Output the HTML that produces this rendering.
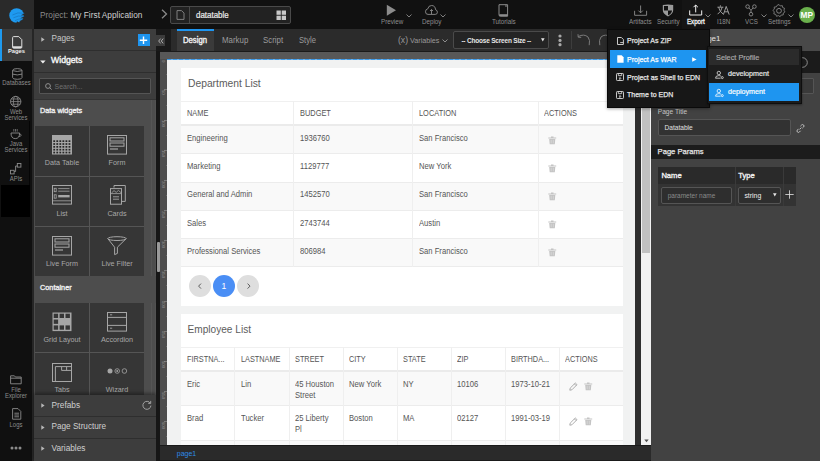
<!DOCTYPE html>
<html><head><meta charset="utf-8">
<style>
*{box-sizing:border-box;}
html,body{margin:0;padding:0;}
body{width:820px;height:461px;overflow:hidden;position:relative;background:#111;font-family:"Liberation Sans",sans-serif;}
.a{position:absolute;}
.t{position:absolute;white-space:nowrap;}
svg{position:absolute;overflow:visible;}
</style></head>
<body>
<!-- TOP BAR -->
<div class="a" style="left:0;top:0;width:820px;height:29px;background:#111;"></div>
<div class="a" style="left:0;top:0;width:34px;height:29px;background:#2a2a2a;"></div>
<svg style="left:9px;top:7.5px" width="16" height="16" viewBox="0 0 16 16">
  <circle cx="7.6" cy="7.5" r="7.3" fill="#1e9af0"/>
  <path d="M3.4 7 Q8.5 3.6 15.4 5.4" stroke="#1670b8" stroke-width="0.6" fill="none"/>
  <path d="M4.4 9.8 Q9 7 15.2 8.4" stroke="#1670b8" stroke-width="0.6" fill="none"/>
  <path d="M6 12.6 Q10 10 14 11.4" stroke="#1670b8" stroke-width="0.6" fill="none"/>
  <path d="M15.4 5.4 L11.8 7.2 L16 7.4 Z M15.2 8.4 L11 10.2 L16 10.6 Z M14 11.4 L10 13.2 L14 15 Z M10.5 15 L8 13.2 L7 16 Z" fill="#2a2a2a"/>
</svg>
<div class="t" style="left:40px;top:9.5px;font-size:8.3px;line-height:10px;color:#8a8a8a;">Project: <span style="color:#d0d0d0">My First Application</span></div>
<svg style="left:161px;top:9px" width="7" height="10" viewBox="0 0 7 10"><path d="M1 0.8 L5.5 5 L1 9.2" stroke="#8a8a8a" stroke-width="1.3" fill="none"/></svg>
<div class="a" style="left:170px;top:6px;width:121px;height:18px;border:1px solid #4a4a4a;border-radius:2px;background:#222;"></div>
<div class="a" style="left:189.2px;top:7px;width:1px;height:16px;background:#4a4a4a;"></div>
<svg style="left:176px;top:10px" width="9" height="10" viewBox="0 0 9 10"><path d="M1 0.6 H5.5 L8 3.1 V9.4 H1 Z" stroke="#8a8a8a" stroke-width="0.9" fill="none"/></svg>
<div class="t" style="left:196px;top:10px;font-size:8.4px;line-height:10px;color:#ececec;-webkit-text-stroke:0.2px;transform:scaleX(0.95);transform-origin:0 0;">datatable</div>
<svg style="left:276px;top:10px" width="11" height="11" viewBox="0 0 11 11"><rect x="0.5" y="0.5" width="4.3" height="4.3" fill="#c8c8c8"/><rect x="5.7" y="0.5" width="4.3" height="4.3" fill="#c8c8c8"/><rect x="0.5" y="5.7" width="4.3" height="4.3" fill="#c8c8c8"/><rect x="5.7" y="5.7" width="4.3" height="4.3" fill="#c8c8c8"/></svg>

<!-- top actions -->
<svg style="left:386px;top:4px" width="11" height="13" viewBox="0 0 11 13"><path d="M0.8 0.8 L10 6.3 L0.8 11.8 Z" fill="#8c8c8c"/></svg>
<div class="t" style="left:381px;top:18.1px;font-size:6.8px;line-height:7px;color:#8e8e8e;transform:scaleX(0.92);transform-origin:0 0;">Preview</div>
<svg style="left:406px;top:14px" width="6" height="4" viewBox="0 0 6 4"><path d="M0.5 0.5 L3 3 L5.5 0.5" stroke="#8c8c8c" stroke-width="0.9" fill="none"/></svg>
<svg style="left:424.5px;top:5px" width="13" height="10" viewBox="0 0 13 10"><path d="M3 9.4 H10.2 Q12.4 9.4 12.4 7.2 Q12.4 5.2 10.6 4.8 Q10.2 0.5 6.6 0.5 Q3.4 0.5 2.8 3.8 Q0.5 4.2 0.5 6.8 Q0.5 9.4 3 9.4 Z" stroke="#8c8c8c" stroke-width="0.9" fill="none"/><path d="M6.5 9.2 V4.6 M5 6 L6.5 4.5 L8 6" stroke="#8c8c8c" stroke-width="0.9" fill="none"/></svg>
<div class="t" style="left:422px;top:18.1px;font-size:6.8px;line-height:7px;color:#8e8e8e;transform:scaleX(0.92);transform-origin:0 0;">Deploy</div>
<svg style="left:440px;top:14px" width="6" height="4" viewBox="0 0 6 4"><path d="M0.5 0.5 L3 3 L5.5 0.5" stroke="#8c8c8c" stroke-width="0.9" fill="none"/></svg>
<svg style="left:498px;top:4px" width="11" height="13" viewBox="0 0 11 13"><path d="M1 0.7 H9.6 V12.2 H2.4 Q1 12.2 1 10.8 Z" stroke="#8c8c8c" stroke-width="1" fill="none"/><path d="M1.2 10.2 H9.6 V12.2 H1.2 Z" fill="#8c8c8c"/><path d="M8 0.7 V3" stroke="#8c8c8c" stroke-width="1"/></svg>
<div class="t" style="left:492px;top:18.1px;font-size:6.8px;line-height:7px;color:#8e8e8e;transform:scaleX(0.92);transform-origin:0 0;">Tutorials</div>

<svg style="left:634px;top:5px" width="14" height="11" viewBox="0 0 14 11"><path d="M0.6 5.8 V10.3 H12.6 V5.8" stroke="#8c8c8c" stroke-width="0.9" fill="none"/><path d="M6.6 0.5 V7.8 M4.4 5.6 L6.6 7.8 L8.8 5.6" stroke="#8c8c8c" stroke-width="0.9" fill="none"/></svg>
<div class="t" style="left:629px;top:18.1px;font-size:6.8px;line-height:7px;color:#8e8e8e;transform:scaleX(0.92);transform-origin:0 0;">Artifacts</div>
<svg style="left:662px;top:4px" width="12" height="13" viewBox="0 0 12 13"><path d="M0.8 1 L6 0.4 L11.2 1 V6 Q11.2 10 6 12.4 Q0.8 10 0.8 6 Z" fill="#9a9a9a"/><path d="M2 2 H6 V6.4 H2 Z M6 6.4 H10 Q9.8 9.6 6 11.2 Z" fill="#111"/></svg>
<div class="t" style="left:657px;top:18.1px;font-size:6.8px;line-height:7px;color:#8e8e8e;transform:scaleX(0.92);transform-origin:0 0;">Security</div>
<div class="a" style="left:682px;top:0;width:28px;height:29px;background:#151515;"></div>
<svg style="left:689px;top:4px" width="14" height="12" viewBox="0 0 14 12"><path d="M0.7 6.4 V11 H12.7 V6.4" stroke="#f0f0f0" stroke-width="1" fill="none"/><path d="M6.7 8.4 V1 M4.5 3.2 L6.7 1 L8.9 3.2" stroke="#f0f0f0" stroke-width="1" fill="none"/></svg>
<div class="t" style="left:687px;top:18.1px;font-size:6.7px;line-height:7px;color:#f4f4f4;-webkit-text-stroke:0.3px;transform:scaleX(0.92);transform-origin:0 0;">Export</div>
<svg style="left:705px;top:14px" width="6" height="4" viewBox="0 0 6 4"><path d="M0.5 0.5 L3 3 L5.5 0.5" stroke="#8c8c8c" stroke-width="0.9" fill="none"/></svg>
<svg style="left:717px;top:5px" width="13" height="10" viewBox="0 0 13 10"><path d="M3.4 0.3 V1.8 M0.4 2.2 H6.4 M1.6 2.2 Q2.6 6.6 6.2 9.2 M5.2 2.2 Q4.4 6.6 0.6 9.2" stroke="#9a9a9a" stroke-width="1" fill="none"/><path d="M6.4 9.6 L9.2 1.4 L12.2 9.6 M7.4 6.8 H11.2" stroke="#9a9a9a" stroke-width="1" fill="none"/></svg>
<div class="t" style="left:717px;top:18.1px;font-size:6.8px;line-height:7px;color:#8e8e8e;transform:scaleX(0.92);transform-origin:0 0;">I18N</div>
<svg style="left:745px;top:4px" width="12" height="13" viewBox="0 0 12 13"><circle cx="2.6" cy="2.6" r="1.8" stroke="#8c8c8c" stroke-width="0.9" fill="none"/><circle cx="9.4" cy="2.6" r="1.8" stroke="#8c8c8c" stroke-width="0.9" fill="none"/><circle cx="6" cy="10.2" r="1.8" stroke="#8c8c8c" stroke-width="0.9" fill="none"/><path d="M4 4 L6 6.3 L8 4 M6 6.3 V8.4" stroke="#8c8c8c" stroke-width="0.9" fill="none"/></svg>
<div class="t" style="left:745px;top:18.1px;font-size:6.8px;line-height:7px;color:#8e8e8e;transform:scaleX(0.92);transform-origin:0 0;">VCS</div>
<svg style="left:761px;top:14px" width="6" height="4" viewBox="0 0 6 4"><path d="M0.5 0.5 L3 3 L5.5 0.5" stroke="#8c8c8c" stroke-width="0.9" fill="none"/></svg>
<svg style="left:772px;top:4px" width="14" height="14" viewBox="0 0 14 14"><path d="M7 0.8 L8.3 2.3 L10.3 1.9 L10.7 3.9 L12.6 4.6 L11.9 6.5 L13 8.2 L11.3 9.3 L11.2 11.3 L9.2 11.3 L8.1 13 L6.4 11.9 L4.5 12.6 L3.8 10.7 L1.8 10.2 L2.3 8.2 L0.9 6.7 L2.4 5.4 L2.2 3.4 L4.2 3.2 L5.3 1.5 Z" stroke="#8c8c8c" stroke-width="0.8" fill="none" transform="translate(0 -0.3)"/><circle cx="7" cy="6.8" r="2.4" stroke="#8c8c8c" stroke-width="0.9" fill="none"/></svg>
<div class="t" style="left:768px;top:18.1px;font-size:6.8px;line-height:7px;color:#8e8e8e;transform:scaleX(0.92);transform-origin:0 0;">Settings</div>
<svg style="left:788px;top:14px" width="6" height="4" viewBox="0 0 6 4"><path d="M0.5 0.5 L3 3 L5.5 0.5" stroke="#8c8c8c" stroke-width="0.9" fill="none"/></svg>
<div class="a" style="left:798.5px;top:6.6px;width:16.4px;height:16.4px;border-radius:50%;background:#6ab04c;"></div>
<div class="t" style="left:798.5px;top:10px;width:16.4px;text-align:center;font-size:8.3px;line-height:10px;color:#fff;font-weight:700;">MP</div>

<!-- LEFT SIDEBAR -->
<div class="a" style="left:0;top:29px;width:32px;height:432px;background:#101010;"></div>
<div class="a" style="left:32px;top:29px;width:2px;height:432px;background:#262626;"></div>
<div class="a" style="left:0;top:29px;width:32px;height:32px;background:#3c3c3c;"></div>
<div class="a" style="left:0;top:29px;width:1.5px;height:32px;background:#1e9af0;"></div>
<svg style="left:12px;top:35.5px" width="11" height="13" viewBox="0 0 11 13"><path d="M1.6 0.6 H6.8 L9.8 3.6 V11.2 Q9.8 12.2 8.8 12.2 H1.6 Q0.6 12.2 0.6 11.2 V1.6 Q0.6 0.6 1.6 0.6 Z" stroke="#dedede" stroke-width="1" fill="none"/><path d="M0.8 10.2 H9.6 V11.4 Q9.6 12 8.8 12 H1.6 Q0.8 12 0.8 11.4 Z" fill="#dedede"/></svg>
<div class="t" style="left:0;top:48px;width:33px;text-align:center;font-size:5.8px;line-height:7px;color:#f0f0f0;font-weight:700;">Pages</div>

<svg style="left:12px;top:68px" width="11" height="12" viewBox="0 0 11 12"><path d="M0.6 2.4 Q0.6 0.6 5.3 0.6 Q10 0.6 10 2.4 V9.6 Q10 11.3 5.3 11.3 Q0.6 11.3 0.6 9.6 Z" stroke="#8c8c8c" stroke-width="0.9" fill="none"/><path d="M0.6 2.6 Q5.3 4.4 10 2.6 M0.6 6.1 Q5.3 7.8 10 6.1" stroke="#8c8c8c" stroke-width="0.9" fill="none"/></svg>
<div class="t" style="left:0;top:79.4px;width:33px;text-align:center;font-size:6.6px;line-height:7px;color:#8c8c8c;transform:scaleX(0.9);">Databases</div>

<svg style="left:10px;top:96px" width="12" height="12" viewBox="0 0 12 12"><circle cx="5.7" cy="5.6" r="5.2" stroke="#8c8c8c" stroke-width="0.9" fill="none"/><ellipse cx="5.7" cy="5.6" rx="2.3" ry="5.2" stroke="#8c8c8c" stroke-width="0.8" fill="none"/><path d="M0.5 5.6 H10.9 M1.3 3 H10.1 M1.3 8.2 H10.1" stroke="#8c8c8c" stroke-width="0.8"/></svg>
<div class="t" style="left:0;top:108.5px;width:32px;text-align:center;font-size:6.6px;line-height:6.2px;color:#8c8c8c;transform:scaleX(0.9);">Web<br>Services</div>

<svg style="left:10px;top:128px" width="12" height="12" viewBox="0 0 12 12"><path d="M1 5 H9.6 Q9.6 10.6 5.3 10.6 Q1 10.6 1 5 Z" stroke="#8c8c8c" stroke-width="0.9" fill="none"/><path d="M9.4 6 Q11.3 6 11.1 7.4 Q10.8 8.6 9 8.4" stroke="#8c8c8c" stroke-width="0.8" fill="none"/><path d="M3.8 1 V3.6 M5.5 1 V3.6 M7.2 1 V3.6" stroke="#8c8c8c" stroke-width="0.7"/></svg>
<div class="t" style="left:0;top:140.5px;width:32px;text-align:center;font-size:6.6px;line-height:6.2px;color:#8c8c8c;transform:scaleX(0.9);">Java<br>Services</div>

<svg style="left:10px;top:163px" width="12" height="12" viewBox="0 0 12 12"><rect x="0.5" y="7.3" width="3.6" height="3.6" stroke="#8c8c8c" stroke-width="0.9" fill="none"/><rect x="7.3" y="0.5" width="3.6" height="3.6" stroke="#8c8c8c" stroke-width="0.9" fill="none"/><path d="M4.1 8.5 H5.6 V3 H7.3" stroke="#8c8c8c" stroke-width="0.9" fill="none"/></svg>
<div class="t" style="left:0;top:174.5px;width:32px;text-align:center;font-size:6.6px;line-height:7px;color:#8c8c8c;transform:scaleX(0.9);">APIs</div>
<div class="a" style="left:1px;top:185px;width:28.5px;height:32px;background:#000;"></div>
<div class="a" style="left:28.8px;top:121px;width:0.9px;height:64px;background:#050505;"></div>

<svg style="left:10px;top:375px" width="12" height="10" viewBox="0 0 12 10"><path d="M0.6 0.8 H4.4 L5.4 2 H11.2 V8.8 H0.6 Z M0.6 3.2 H11.2" stroke="#8c8c8c" stroke-width="0.9" fill="none"/></svg>
<div class="t" style="left:0;top:386.5px;width:32px;text-align:center;font-size:6.6px;line-height:6.2px;color:#8c8c8c;transform:scaleX(0.9);">File<br>Explorer</div>
<svg style="left:12px;top:407.5px" width="10" height="12" viewBox="0 0 10 12"><path d="M0.6 0.6 H6 L8.8 3.4 V11.2 H0.6 Z" stroke="#8c8c8c" stroke-width="0.9" fill="none"/><path d="M2.4 5.2 H7 M2.4 7 H7 M2.4 8.8 H7" stroke="#8c8c8c" stroke-width="0.9"/></svg>
<div class="t" style="left:0;top:421px;width:32px;text-align:center;font-size:6.6px;line-height:7px;color:#8c8c8c;transform:scaleX(0.9);">Logs</div>
<svg style="left:10px;top:446px" width="12" height="4" viewBox="0 0 12 4"><circle cx="2" cy="2" r="1.5" fill="#8c8c8c"/><circle cx="6" cy="2" r="1.5" fill="#8c8c8c"/><circle cx="10" cy="2" r="1.5" fill="#8c8c8c"/></svg>

<!-- LEFT PANEL -->
<div class="a" style="left:34px;top:29px;width:122px;height:432px;background:#3d3d3d;"></div>
<div class="a" style="left:34px;top:50px;width:122px;height:1px;background:#2e2e2e;"></div>
<svg style="left:41px;top:37px" width="4" height="5" viewBox="0 0 4 5"><path d="M0.3 0.3 L3.6 2.5 L0.3 4.7 Z" fill="#b8b8b8"/></svg>
<div class="t" style="left:51.5px;top:34.2px;font-size:8.2px;line-height:10px;color:#c8c8c8;">Pages</div>
<div class="a" style="left:137.5px;top:33.5px;width:12.7px;height:12.6px;background:#1e95f0;"></div>
<svg style="left:137.3px;top:33.5px" width="13" height="12.5" viewBox="0 0 13 12.5"><path d="M6.5 2.6 V10 M2.8 6.3 H10.2" stroke="#fff" stroke-width="1.4"/></svg>
<div class="a" style="left:34px;top:72px;width:122px;height:1px;background:#2e2e2e;"></div>
<svg style="left:39.5px;top:59.5px" width="6" height="4" viewBox="0 0 6 4"><path d="M0.2 0.4 H5.6 L2.9 3.6 Z" fill="#f0f0f0"/></svg>
<div class="t" style="left:51px;top:54.7px;font-size:8.7px;line-height:10px;color:#f4f4f4;-webkit-text-stroke:0.4px;">Widgets</div>
<div class="a" style="left:39.3px;top:78.4px;width:111.9px;height:16px;background:#2c2c2c;border:1px solid #555;border-radius:1px;"></div>
<svg style="left:45px;top:83px" width="7" height="7" viewBox="0 0 7 7"><circle cx="3" cy="3" r="2.4" stroke="#999" stroke-width="0.9" fill="none"/><path d="M4.7 4.7 L6.6 6.6" stroke="#999" stroke-width="0.9"/></svg>
<div class="t" style="left:54.5px;top:82px;font-size:7px;line-height:9px;color:#6f6f6f;">Search...</div>
<div class="a" style="left:34px;top:98.5px;width:122px;height:1px;background:#333;"></div>
<div class="a" style="left:34px;top:99.5px;width:122px;height:296px;background:#4d4d4d;"></div>
<div class="t" style="left:40px;top:105.9px;font-size:7.3px;line-height:9px;color:#eeeeee;-webkit-text-stroke:0.35px;">Data widgets</div>
<div class="a" style="left:35px;top:126px;width:109px;height:270px;background:#555;"></div>
<div class="a" style="left:150.8px;top:99.5px;width:0.8px;height:296px;background:#555;"></div>
<div class="a" style="left:155px;top:99.5px;width:1px;height:296px;background:#525252;"></div>
<div class="a" style="left:35px;top:126px;width:54px;height:49.5px;background:#363636;"></div>
<svg style="left:51.8px;top:135px" width="20" height="20" viewBox="0 0 20 20"><rect x="0" y="0" width="20" height="19.5" fill="#a6a6a6"/><rect x="1.30" y="5.30" width="1.8" height="1.7" fill="#262626"/><rect x="1.30" y="8.15" width="1.8" height="1.7" fill="#262626"/><rect x="1.30" y="11.00" width="1.8" height="1.7" fill="#262626"/><rect x="1.30" y="13.85" width="1.8" height="1.7" fill="#262626"/><rect x="1.30" y="16.70" width="1.8" height="1.7" fill="#262626"/><rect x="4.35" y="5.30" width="1.8" height="1.7" fill="#262626"/><rect x="4.35" y="8.15" width="1.8" height="1.7" fill="#262626"/><rect x="4.35" y="11.00" width="1.8" height="1.7" fill="#262626"/><rect x="4.35" y="13.85" width="1.8" height="1.7" fill="#262626"/><rect x="4.35" y="16.70" width="1.8" height="1.7" fill="#262626"/><rect x="7.40" y="5.30" width="1.8" height="1.7" fill="#262626"/><rect x="7.40" y="8.15" width="1.8" height="1.7" fill="#262626"/><rect x="7.40" y="11.00" width="1.8" height="1.7" fill="#262626"/><rect x="7.40" y="13.85" width="1.8" height="1.7" fill="#262626"/><rect x="7.40" y="16.70" width="1.8" height="1.7" fill="#262626"/><rect x="10.45" y="5.30" width="1.8" height="1.7" fill="#262626"/><rect x="10.45" y="8.15" width="1.8" height="1.7" fill="#262626"/><rect x="10.45" y="11.00" width="1.8" height="1.7" fill="#262626"/><rect x="10.45" y="13.85" width="1.8" height="1.7" fill="#262626"/><rect x="10.45" y="16.70" width="1.8" height="1.7" fill="#262626"/><rect x="13.50" y="5.30" width="1.8" height="1.7" fill="#262626"/><rect x="13.50" y="8.15" width="1.8" height="1.7" fill="#262626"/><rect x="13.50" y="11.00" width="1.8" height="1.7" fill="#262626"/><rect x="13.50" y="13.85" width="1.8" height="1.7" fill="#262626"/><rect x="13.50" y="16.70" width="1.8" height="1.7" fill="#262626"/><rect x="16.55" y="5.30" width="1.8" height="1.7" fill="#262626"/><rect x="16.55" y="8.15" width="1.8" height="1.7" fill="#262626"/><rect x="16.55" y="11.00" width="1.8" height="1.7" fill="#262626"/><rect x="16.55" y="13.85" width="1.8" height="1.7" fill="#262626"/><rect x="16.55" y="16.70" width="1.8" height="1.7" fill="#262626"/></svg>
<div class="t" style="left:35px;top:159px;width:54px;text-align:center;font-size:8px;line-height:8px;color:#a8a8a8;transform:scaleX(0.9);">Data Table</div>
<div class="a" style="left:90px;top:126px;width:54px;height:49.5px;background:#363636;"></div>
<svg style="left:106.8px;top:135px" width="20" height="20" viewBox="0 0 20 20"><rect x="0.5" y="0.5" width="19" height="18.6" stroke="#a6a6a6" stroke-width="1" fill="none"/><rect x="3" y="2.8" width="14" height="3.2" stroke="#a6a6a6" stroke-width="1" fill="none"/><rect x="3" y="8" width="14" height="3.2" stroke="#a6a6a6" stroke-width="1" fill="none"/><path d="M3 14 H11" stroke="#a6a6a6" stroke-width="1.2"/></svg>
<div class="t" style="left:90px;top:159px;width:54px;text-align:center;font-size:8px;line-height:8px;color:#a8a8a8;transform:scaleX(0.9);">Form</div>
<div class="a" style="left:35px;top:176.6px;width:54px;height:49.5px;background:#363636;"></div>
<svg style="left:51.8px;top:185.2px" width="20" height="20" viewBox="0 0 20 20"><rect x="0.5" y="0.5" width="19" height="18.6" stroke="#a6a6a6" stroke-width="1" fill="none"/><rect x="2.2" y="3.3" width="2" height="3.4" stroke="#a6a6a6" stroke-width="0.8" fill="none"/><rect x="2.2" y="9.8" width="2" height="3.4" stroke="#a6a6a6" stroke-width="0.8" fill="none"/><path d="M6.2 3.6 H17.5 M6.2 6.2 H17.5" stroke="#a6a6a6" stroke-width="0.8"/><rect x="6.2" y="10" width="11.4" height="2.4" fill="#a6a6a6"/><path d="M0.5 15.8 H19.5" stroke="#a6a6a6" stroke-width="0.8"/></svg>
<div class="t" style="left:35px;top:209.6px;width:54px;text-align:center;font-size:8px;line-height:8px;color:#a8a8a8;transform:scaleX(0.9);">List</div>
<div class="a" style="left:90px;top:176.6px;width:54px;height:49.5px;background:#363636;"></div>
<svg style="left:109.5px;top:185.2px" width="16" height="20" viewBox="0 0 16 20"><path d="M4 2.6 V0.5 H15.3 V16.4 H11.5" stroke="#a6a6a6" stroke-width="1" fill="none"/><rect x="0.5" y="3.6" width="11" height="15.6" stroke="#a6a6a6" stroke-width="1" fill="none"/><path d="M1 8.6 H11 M1.5 8 L4 5.6 L6.2 7.4 L8.4 5.4 L11 7.6" stroke="#a6a6a6" stroke-width="0.8" fill="none"/><path d="M3 11.8 H9 M3 14.2 H9" stroke="#a6a6a6" stroke-width="0.9"/></svg>
<div class="t" style="left:90px;top:209.6px;width:54px;text-align:center;font-size:8px;line-height:8px;color:#a8a8a8;transform:scaleX(0.9);">Cards</div>
<div class="a" style="left:35px;top:227.2px;width:54px;height:49.5px;background:#363636;"></div>
<svg style="left:51.8px;top:236px" width="20" height="20" viewBox="0 0 20 20"><rect x="0.5" y="0.5" width="19" height="18.6" stroke="#a6a6a6" stroke-width="1" fill="none"/><rect x="3" y="2.8" width="14" height="3.2" stroke="#a6a6a6" stroke-width="1" fill="none"/><rect x="3" y="8" width="14" height="3.2" stroke="#a6a6a6" stroke-width="1" fill="none"/><path d="M3 14 H11" stroke="#a6a6a6" stroke-width="1.2"/></svg>
<div class="t" style="left:35px;top:260.2px;width:54px;text-align:center;font-size:8px;line-height:8px;color:#a8a8a8;transform:scaleX(0.9);">Live Form</div>
<div class="a" style="left:90px;top:227.2px;width:54px;height:49.5px;background:#363636;"></div>
<svg style="left:107px;top:236px" width="20" height="20" viewBox="0 0 20 20"><ellipse cx="10" cy="2.6" rx="9.2" ry="1.9" stroke="#a6a6a6" stroke-width="1" fill="none"/><path d="M0.8 2.6 L7.6 11.2 V18.6 L10.4 17.4 V11.2 L19.2 2.6" stroke="#a6a6a6" stroke-width="1" fill="none"/></svg>
<div class="t" style="left:90px;top:260.2px;width:54px;text-align:center;font-size:8px;line-height:8px;color:#a8a8a8;transform:scaleX(0.9);">Live Filter</div>
<div class="a" style="left:34px;top:275.6px;width:122px;height:27px;background:#4d4d4d;"></div>
<div class="t" style="left:40px;top:283px;font-size:7.3px;line-height:9px;color:#eeeeee;-webkit-text-stroke:0.35px;">Container</div>
<div class="a" style="left:35px;top:302.6px;width:54px;height:49.5px;background:#363636;"></div>
<svg style="left:52px;top:311.6px" width="20" height="20" viewBox="0 0 20 20"><rect x="0.5" y="0.5" width="19" height="18.6" fill="#a6a6a6"/><rect x="1.70" y="1.70" width="4.4" height="4.3" fill="#363636"/><rect x="7.60" y="1.70" width="4.4" height="4.3" fill="#363636"/><rect x="13.50" y="1.70" width="4.4" height="4.3" fill="#363636"/><rect x="1.70" y="7.55" width="4.4" height="4.3" fill="#363636"/><rect x="1.70" y="13.40" width="4.4" height="4.3" fill="#363636"/><rect x="7.60" y="13.40" width="4.4" height="4.3" fill="#363636"/><rect x="13.50" y="13.40" width="4.4" height="4.3" fill="#363636"/></svg>
<div class="t" style="left:35px;top:335.6px;width:54px;text-align:center;font-size:8px;line-height:8px;color:#a8a8a8;transform:scaleX(0.9);">Grid Layout</div>
<div class="a" style="left:90px;top:302.6px;width:54px;height:49.5px;background:#363636;"></div>
<svg style="left:107.3px;top:311.6px" width="20" height="20" viewBox="0 0 20 20"><rect x="0.5" y="0.5" width="19" height="18.6" stroke="#a6a6a6" stroke-width="1" fill="none"/><path d="M0.5 5.4 H19.5 M0.5 13.4 H19.5" stroke="#a6a6a6" stroke-width="1"/><path d="M3 2.8 H5.2 M3 16.2 H5.2" stroke="#a6a6a6" stroke-width="0.9"/></svg>
<div class="t" style="left:90px;top:335.6px;width:54px;text-align:center;font-size:8px;line-height:8px;color:#a8a8a8;transform:scaleX(0.9);">Accordion</div>
<div class="a" style="left:35px;top:353.2px;width:54px;height:49.5px;background:#363636;"></div>
<svg style="left:52px;top:362.6px" width="20" height="20" viewBox="0 0 20 20"><rect x="0.5" y="0.5" width="19" height="18" stroke="#a6a6a6" stroke-width="1" fill="none"/><path d="M3.4 18.5 V3.6 H19.5 M9.6 3.6 V7.4 H19.5 M14.6 3.6 V7.4" stroke="#a6a6a6" stroke-width="1" fill="none"/></svg>
<div class="t" style="left:35px;top:386.2px;width:54px;text-align:center;font-size:8px;line-height:8px;color:#a8a8a8;transform:scaleX(0.9);">Tabs</div>
<div class="a" style="left:90px;top:353.2px;width:54px;height:49.5px;background:#363636;"></div>
<svg style="left:107px;top:367.5px" width="21" height="6" viewBox="0 0 21 6"><circle cx="3" cy="3" r="2.5" fill="#a6a6a6"/><circle cx="10.2" cy="3" r="2.3" stroke="#a6a6a6" stroke-width="0.8" fill="none"/><circle cx="10.2" cy="3" r="0.9" fill="#a6a6a6"/><circle cx="17.4" cy="3" r="2.3" stroke="#a6a6a6" stroke-width="0.8" fill="none"/></svg>
<div class="t" style="left:90px;top:386.2px;width:54px;text-align:center;font-size:8px;line-height:8px;color:#a8a8a8;transform:scaleX(0.9);">Wizard</div>
<div class="a" style="left:34px;top:395px;width:122px;height:66px;background:#3d3d3d;box-shadow:0 -2px 3px rgba(0,0,0,0.35);"></div>
<div class="a" style="left:34px;top:415.8px;width:122px;height:1px;background:#2e2e2e;"></div>
<div class="a" style="left:34px;top:438px;width:122px;height:1px;background:#2e2e2e;"></div>
<svg style="left:41px;top:403px" width="4" height="5" viewBox="0 0 4 5"><path d="M0.3 0.3 L3.6 2.5 L0.3 4.7 Z" fill="#b8b8b8"/></svg>
<div class="t" style="left:51.5px;top:400px;font-size:8.3px;line-height:10px;color:#cfcfcf;">Prefabs</div>
<svg style="left:141.5px;top:400px" width="10" height="10" viewBox="0 0 10 10"><path d="M8.3 3.2 A4 4 0 1 0 8.9 5.6" stroke="#aaa" stroke-width="0.9" fill="none"/><path d="M6.2 3.4 H8.7 V0.9" stroke="#aaa" stroke-width="0.9" fill="none"/></svg>
<svg style="left:41px;top:424.5px" width="4" height="5" viewBox="0 0 4 5"><path d="M0.3 0.3 L3.6 2.5 L0.3 4.7 Z" fill="#b8b8b8"/></svg>
<div class="t" style="left:51.5px;top:422px;font-size:8.2px;line-height:10px;color:#cfcfcf;">Page Structure</div>
<svg style="left:41px;top:446px" width="4" height="5" viewBox="0 0 4 5"><path d="M0.3 0.3 L3.6 2.5 L0.3 4.7 Z" fill="#b8b8b8"/></svg>
<div class="t" style="left:51.5px;top:443px;font-size:8.3px;line-height:10px;color:#cfcfcf;">Variables</div>

<!-- DARK STRIP -->
<div class="a" style="left:156px;top:29px;width:4px;height:432px;background:#161616;"></div>
<div class="a" style="left:156.5px;top:242px;width:3px;height:30px;background:#9a9a9a;border-radius:1px;"></div>

<!-- TABS BAR -->
<div class="a" style="left:156px;top:29px;width:495px;height:22px;background:#2b2b2b;"></div>
<div class="a" style="left:156px;top:29px;width:15px;height:22px;background:#1a1a1a;"></div>
<div class="a" style="left:156px;top:35.3px;width:9px;height:10.7px;background:#3c3c3c;"></div>
<svg style="left:157.5px;top:37.5px" width="6" height="6" viewBox="0 0 6 6"><path d="M2.6 0.6 L0.7 3 L2.6 5.4 M5.2 0.6 L3.3 3 L5.2 5.4" stroke="#c8c8c8" stroke-width="0.8" fill="none"/></svg>
<div class="a" style="left:176.5px;top:29px;width:37.5px;height:22px;background:#3a3a3a;"></div>
<div class="a" style="left:176.5px;top:29px;width:37.5px;height:2px;background:#1e95f0;"></div>
<div class="t" style="left:182.8px;top:36.1px;font-size:8.2px;line-height:9px;color:#f4f4f4;-webkit-text-stroke:0.35px;transform:scaleX(0.94);transform-origin:0 0;">Design</div>
<div class="t" style="left:221.8px;top:35.5px;font-size:8.3px;line-height:9px;color:#9c9c9c;transform:scaleX(0.95);transform-origin:0 0;">Markup</div>
<div class="t" style="left:263px;top:35.5px;font-size:8.3px;line-height:9px;color:#9c9c9c;transform:scaleX(0.95);transform-origin:0 0;">Script</div>
<div class="t" style="left:298.5px;top:35.5px;font-size:8.3px;line-height:9px;color:#9c9c9c;transform:scaleX(0.92);transform-origin:0 0;">Style</div>
<div class="t" style="left:398px;top:34.8px;font-size:8.6px;line-height:10px;color:#9a9a9a;">(x)</div>
<div class="t" style="left:410px;top:35.6px;font-size:7.2px;line-height:9px;color:#9a9a9a;">Variables</div>
<svg style="left:442px;top:38.5px" width="6" height="4" viewBox="0 0 6 4"><path d="M0.5 0.5 L3 3 L5.5 0.5" stroke="#9a9a9a" stroke-width="0.9" fill="none"/></svg>
<div class="a" style="left:452.6px;top:31.4px;width:96.2px;height:17.5px;background:#242424;border:1px solid #4a4a4a;border-radius:2px;"></div>
<div class="t" style="left:461.4px;top:35.5px;font-size:6.5px;line-height:9px;color:#e6e6e6;font-weight:700;letter-spacing:-0.2px;">-- Choose Screen Size --</div>
<svg style="left:541px;top:38px" width="4" height="4" viewBox="0 0 4 4"><path d="M0 0.2 H3.6 L1.8 3.6 Z" fill="#e6e6e6"/></svg>
<svg style="left:558px;top:33.5px" width="4" height="13" viewBox="0 0 4 13"><circle cx="2" cy="2" r="1.6" fill="#a8a8a8"/><circle cx="2" cy="6.4" r="1.6" fill="#a8a8a8"/><circle cx="2" cy="10.7" r="1.6" fill="#a8a8a8"/></svg>
<div class="a" style="left:571px;top:31.4px;width:1px;height:17.5px;background:#3d3d3d;"></div>
<svg style="left:577px;top:34px" width="14" height="12" viewBox="0 0 14 12"><path d="M1.2 2.6 Q7 -0.5 11 3 Q13.4 6 12.2 11.2" stroke="#7a7a7a" stroke-width="1" fill="none"/><path d="M1 0.2 L1.2 3.2 L4.2 3.4" stroke="#7a7a7a" stroke-width="1" fill="none"/></svg>
<svg style="left:598px;top:34px" width="14" height="12" viewBox="0 0 14 12"><path d="M12.8 2.6 Q7 -0.5 3 3 Q0.6 6 1.8 11.2" stroke="#7a7a7a" stroke-width="1" fill="none"/></svg>
<div class="a" style="left:160px;top:50.5px;width:491px;height:1.2px;background:#1a1a1a;"></div>

<!-- CANVAS -->
<div class="a" style="left:160px;top:51.5px;width:475px;height:393.5px;background:#4d4d4d;"></div>
<div class="a" style="left:160px;top:51.7px;width:475px;height:7.3px;background:#585858;"></div>
<div class="a" style="left:167px;top:59px;width:468px;height:386px;background:#f1f2f2;"></div>
<div class="a" style="left:167px;top:59px;width:468px;height:1.2px;background:repeating-linear-gradient(90deg,#3d9be9 0 4px,#6cb2ee 4px 6px);"></div>
<div class="a" style="left:635px;top:51px;width:5.5px;height:394px;background:#2e2e2e;"></div>
<div class="a" style="left:640.5px;top:51px;width:10.5px;height:394px;background:#f1f1f1;"></div>
<div class="a" style="left:642px;top:51px;width:8px;height:202px;background:#c1c1c1;"></div>
<svg style="left:643.5px;top:438.5px" width="5" height="4" viewBox="0 0 5 4"><path d="M0.3 0.5 H4.7 L2.5 3.3 Z" fill="#505050"/></svg>

<!-- CARDS -->
<div class="t" style="left:160px;top:59.9px;writing-mode:vertical-rl;font-size:4.2px;line-height:4.5px;color:#959595;">0</div>
<div class="a" style="left:165.5px;top:74.4px;width:1.5px;height:0.8px;background:#6a6a6a;"></div>
<div class="a" style="left:163.5px;top:89.4px;width:3.5px;height:0.8px;background:#7a7a7a;"></div>
<div class="t" style="left:160px;top:90.0px;writing-mode:vertical-rl;font-size:4.2px;line-height:4.5px;color:#959595;">50</div>
<div class="a" style="left:165.5px;top:104.5px;width:1.5px;height:0.8px;background:#6a6a6a;"></div>
<div class="a" style="left:163.5px;top:119.6px;width:3.5px;height:0.8px;background:#7a7a7a;"></div>
<div class="t" style="left:160px;top:120.2px;writing-mode:vertical-rl;font-size:4.2px;line-height:4.5px;color:#959595;">100</div>
<div class="a" style="left:165.5px;top:134.7px;width:1.5px;height:0.8px;background:#6a6a6a;"></div>
<div class="a" style="left:163.5px;top:149.8px;width:3.5px;height:0.8px;background:#7a7a7a;"></div>
<div class="t" style="left:160px;top:150.3px;writing-mode:vertical-rl;font-size:4.2px;line-height:4.5px;color:#959595;">150</div>
<div class="a" style="left:165.5px;top:164.8px;width:1.5px;height:0.8px;background:#6a6a6a;"></div>
<div class="a" style="left:163.5px;top:179.9px;width:3.5px;height:0.8px;background:#7a7a7a;"></div>
<div class="t" style="left:160px;top:180.5px;writing-mode:vertical-rl;font-size:4.2px;line-height:4.5px;color:#959595;">200</div>
<div class="a" style="left:165.5px;top:195.0px;width:1.5px;height:0.8px;background:#6a6a6a;"></div>
<div class="a" style="left:163.5px;top:210.1px;width:3.5px;height:0.8px;background:#7a7a7a;"></div>
<div class="t" style="left:160px;top:210.7px;writing-mode:vertical-rl;font-size:4.2px;line-height:4.5px;color:#959595;">250</div>
<div class="a" style="left:165.5px;top:225.1px;width:1.5px;height:0.8px;background:#6a6a6a;"></div>
<div class="a" style="left:163.5px;top:240.2px;width:3.5px;height:0.8px;background:#7a7a7a;"></div>
<div class="t" style="left:160px;top:240.8px;writing-mode:vertical-rl;font-size:4.2px;line-height:4.5px;color:#959595;">300</div>
<div class="a" style="left:165.5px;top:255.3px;width:1.5px;height:0.8px;background:#6a6a6a;"></div>
<div class="a" style="left:163.5px;top:270.3px;width:3.5px;height:0.8px;background:#7a7a7a;"></div>
<div class="t" style="left:160px;top:270.9px;writing-mode:vertical-rl;font-size:4.2px;line-height:4.5px;color:#959595;">350</div>
<div class="a" style="left:165.5px;top:285.4px;width:1.5px;height:0.8px;background:#6a6a6a;"></div>
<div class="a" style="left:163.5px;top:300.5px;width:3.5px;height:0.8px;background:#7a7a7a;"></div>
<div class="t" style="left:160px;top:301.1px;writing-mode:vertical-rl;font-size:4.2px;line-height:4.5px;color:#959595;">400</div>
<div class="a" style="left:165.5px;top:315.6px;width:1.5px;height:0.8px;background:#6a6a6a;"></div>
<div class="a" style="left:163.5px;top:330.6px;width:3.5px;height:0.8px;background:#7a7a7a;"></div>
<div class="t" style="left:160px;top:331.2px;writing-mode:vertical-rl;font-size:4.2px;line-height:4.5px;color:#959595;">450</div>
<div class="a" style="left:165.5px;top:345.7px;width:1.5px;height:0.8px;background:#6a6a6a;"></div>
<div class="a" style="left:163.5px;top:360.8px;width:3.5px;height:0.8px;background:#7a7a7a;"></div>
<div class="t" style="left:160px;top:361.4px;writing-mode:vertical-rl;font-size:4.2px;line-height:4.5px;color:#959595;">500</div>
<div class="a" style="left:165.5px;top:375.9px;width:1.5px;height:0.8px;background:#6a6a6a;"></div>
<div class="a" style="left:163.5px;top:390.9px;width:3.5px;height:0.8px;background:#7a7a7a;"></div>
<div class="t" style="left:160px;top:391.6px;writing-mode:vertical-rl;font-size:4.2px;line-height:4.5px;color:#959595;">550</div>
<div class="a" style="left:165.5px;top:406.0px;width:1.5px;height:0.8px;background:#6a6a6a;"></div>
<div class="a" style="left:163.5px;top:421.1px;width:3.5px;height:0.8px;background:#7a7a7a;"></div>
<div class="t" style="left:160px;top:421.7px;writing-mode:vertical-rl;font-size:4.2px;line-height:4.5px;color:#959595;">600</div>
<div class="a" style="left:165.5px;top:436.2px;width:1.5px;height:0.8px;background:#6a6a6a;"></div>
<div class="a" style="left:181px;top:68px;width:441.7px;height:238px;background:#fff;"></div>
<div class="t" style="left:188px;top:77.5px;font-size:10.3px;line-height:12px;color:#5c5c5c;">Department List</div>
<div class="a" style="left:181px;top:101px;width:441.7px;height:1px;background:#f0f0f0;"></div>
<div class="a" style="left:181px;top:124.2px;width:441.7px;height:2px;background:#ebebeb;"></div>
<div class="t" style="left:187px;top:108.9px;font-size:8.4px;line-height:9px;color:#555;transform:scaleX(0.885);transform-origin:0 0;">NAME</div>
<div class="t" style="left:300.20000000000005px;top:108.9px;font-size:8.4px;line-height:9px;color:#555;transform:scaleX(0.885);transform-origin:0 0;">BUDGET</div>
<div class="t" style="left:418.6px;top:108.9px;font-size:8.4px;line-height:9px;color:#555;transform:scaleX(0.885);transform-origin:0 0;">LOCATION</div>
<div class="t" style="left:544.4px;top:108.9px;font-size:8.4px;line-height:9px;color:#555;transform:scaleX(0.885);transform-origin:0 0;">ACTIONS</div>
<div class="a" style="left:181px;top:126.3px;width:441.7px;height:27.1px;background:#f9f9f9;"></div>
<div class="a" style="left:181px;top:153.4px;width:441.7px;height:1px;background:#ececec;"></div>
<div class="t" style="left:187px;top:134.2px;font-size:8.3px;line-height:9px;color:#555;transform:scaleX(0.92);transform-origin:0 0;">Engineering</div>
<div class="t" style="left:300.20000000000005px;top:134.2px;font-size:8.3px;line-height:9px;color:#555;transform:scaleX(0.92);transform-origin:0 0;">1936760</div>
<div class="t" style="left:418.6px;top:134.2px;font-size:8.3px;line-height:9px;color:#555;transform:scaleX(0.92);transform-origin:0 0;">San Francisco</div>
<svg style="left:547.6px;top:135.8px" width="9" height="9" viewBox="0 0 9 9"><path d="M0.3 1.6 H8.2 V2.6 H0.3 Z M3 0.4 H5.5 V1.6 H3 Z" fill="#c4c4c4"/><path d="M1.2 3 H7.3 L6.8 8.2 H1.7 Z" fill="#c4c4c4"/><path d="M3.2 3.8 V7.4 M5.3 3.8 V7.4" stroke="#e6e6e6" stroke-width="0.5"/></svg>
<div class="a" style="left:181px;top:154.4px;width:441.7px;height:27.1px;background:#fff;"></div>
<div class="a" style="left:181px;top:181.5px;width:441.7px;height:1px;background:#ececec;"></div>
<div class="t" style="left:187px;top:162.3px;font-size:8.3px;line-height:9px;color:#555;transform:scaleX(0.92);transform-origin:0 0;">Marketing</div>
<div class="t" style="left:300.20000000000005px;top:162.3px;font-size:8.3px;line-height:9px;color:#555;transform:scaleX(0.92);transform-origin:0 0;">1129777</div>
<div class="t" style="left:418.6px;top:162.3px;font-size:8.3px;line-height:9px;color:#555;transform:scaleX(0.92);transform-origin:0 0;">New York</div>
<svg style="left:547.6px;top:163.9px" width="9" height="9" viewBox="0 0 9 9"><path d="M0.3 1.6 H8.2 V2.6 H0.3 Z M3 0.4 H5.5 V1.6 H3 Z" fill="#c4c4c4"/><path d="M1.2 3 H7.3 L6.8 8.2 H1.7 Z" fill="#c4c4c4"/><path d="M3.2 3.8 V7.4 M5.3 3.8 V7.4" stroke="#e6e6e6" stroke-width="0.5"/></svg>
<div class="a" style="left:181px;top:182.5px;width:441.7px;height:27.1px;background:#f9f9f9;"></div>
<div class="a" style="left:181px;top:209.6px;width:441.7px;height:1px;background:#ececec;"></div>
<div class="t" style="left:187px;top:190.4px;font-size:8.3px;line-height:9px;color:#555;transform:scaleX(0.92);transform-origin:0 0;">General and Admin</div>
<div class="t" style="left:300.20000000000005px;top:190.4px;font-size:8.3px;line-height:9px;color:#555;transform:scaleX(0.92);transform-origin:0 0;">1452570</div>
<div class="t" style="left:418.6px;top:190.4px;font-size:8.3px;line-height:9px;color:#555;transform:scaleX(0.92);transform-origin:0 0;">San Francisco</div>
<svg style="left:547.6px;top:192.0px" width="9" height="9" viewBox="0 0 9 9"><path d="M0.3 1.6 H8.2 V2.6 H0.3 Z M3 0.4 H5.5 V1.6 H3 Z" fill="#c4c4c4"/><path d="M1.2 3 H7.3 L6.8 8.2 H1.7 Z" fill="#c4c4c4"/><path d="M3.2 3.8 V7.4 M5.3 3.8 V7.4" stroke="#e6e6e6" stroke-width="0.5"/></svg>
<div class="a" style="left:181px;top:210.6px;width:441.7px;height:27.1px;background:#fff;"></div>
<div class="a" style="left:181px;top:237.7px;width:441.7px;height:1px;background:#ececec;"></div>
<div class="t" style="left:187px;top:218.5px;font-size:8.3px;line-height:9px;color:#555;transform:scaleX(0.92);transform-origin:0 0;">Sales</div>
<div class="t" style="left:300.20000000000005px;top:218.5px;font-size:8.3px;line-height:9px;color:#555;transform:scaleX(0.92);transform-origin:0 0;">2743744</div>
<div class="t" style="left:418.6px;top:218.5px;font-size:8.3px;line-height:9px;color:#555;transform:scaleX(0.92);transform-origin:0 0;">Austin</div>
<svg style="left:547.6px;top:220.1px" width="9" height="9" viewBox="0 0 9 9"><path d="M0.3 1.6 H8.2 V2.6 H0.3 Z M3 0.4 H5.5 V1.6 H3 Z" fill="#c4c4c4"/><path d="M1.2 3 H7.3 L6.8 8.2 H1.7 Z" fill="#c4c4c4"/><path d="M3.2 3.8 V7.4 M5.3 3.8 V7.4" stroke="#e6e6e6" stroke-width="0.5"/></svg>
<div class="a" style="left:181px;top:238.7px;width:441.7px;height:27.1px;background:#f9f9f9;"></div>
<div class="a" style="left:181px;top:265.8px;width:441.7px;height:1px;background:#ececec;"></div>
<div class="t" style="left:187px;top:246.6px;font-size:8.3px;line-height:9px;color:#555;transform:scaleX(0.92);transform-origin:0 0;">Professional Services</div>
<div class="t" style="left:300.20000000000005px;top:246.6px;font-size:8.3px;line-height:9px;color:#555;transform:scaleX(0.92);transform-origin:0 0;">806984</div>
<div class="t" style="left:418.6px;top:246.6px;font-size:8.3px;line-height:9px;color:#555;transform:scaleX(0.92);transform-origin:0 0;">San Francisco</div>
<svg style="left:547.6px;top:248.2px" width="9" height="9" viewBox="0 0 9 9"><path d="M0.3 1.6 H8.2 V2.6 H0.3 Z M3 0.4 H5.5 V1.6 H3 Z" fill="#c4c4c4"/><path d="M1.2 3 H7.3 L6.8 8.2 H1.7 Z" fill="#c4c4c4"/><path d="M3.2 3.8 V7.4 M5.3 3.8 V7.4" stroke="#e6e6e6" stroke-width="0.5"/></svg>
<div class="a" style="left:292.9px;top:101px;width:1px;height:165.6px;background:#efefef;"></div>
<div class="a" style="left:411.5px;top:101px;width:1px;height:165.6px;background:#efefef;"></div>
<div class="a" style="left:538px;top:101px;width:1px;height:165.6px;background:#efefef;"></div>
<div class="a" style="left:189px;top:274.8px;width:22px;height:22px;border-radius:50%;background:#dedede;"></div>
<svg style="left:197px;top:282.5px" width="6" height="7" viewBox="0 0 6 7"><path d="M4 0.6 L1.6 3.1 L4 5.6" stroke="#555" stroke-width="0.95" fill="none"/></svg>
<div class="a" style="left:213px;top:274.8px;width:22px;height:22px;border-radius:50%;background:#4a8ef5;"></div>
<div class="t" style="left:213px;top:280.6px;width:22px;text-align:center;font-size:8.6px;line-height:10px;color:#fff;">1</div>
<div class="a" style="left:237px;top:274.8px;width:22px;height:22px;border-radius:50%;background:#dedede;"></div>
<svg style="left:245.5px;top:282.5px" width="6" height="7" viewBox="0 0 6 7"><path d="M1.6 0.6 L4 3.1 L1.6 5.6" stroke="#555" stroke-width="0.95" fill="none"/></svg>
<div class="a" style="left:181px;top:314px;width:441.7px;height:131px;background:#fff;"></div>
<div class="t" style="left:187.6px;top:324px;font-size:10.1px;line-height:12px;color:#5c5c5c;">Employee List</div>
<div class="a" style="left:181px;top:347px;width:441.7px;height:1px;background:#f0f0f0;"></div>
<div class="a" style="left:181px;top:369.6px;width:441.7px;height:2px;background:#ebebeb;"></div>
<div class="t" style="left:186.8px;top:354.8px;font-size:8.4px;line-height:9px;color:#555;transform:scaleX(0.875);transform-origin:0 0;">FIRSTNA...</div>
<div class="t" style="left:240.7px;top:354.8px;font-size:8.4px;line-height:9px;color:#555;transform:scaleX(0.875);transform-origin:0 0;">LASTNAME</div>
<div class="t" style="left:294.9px;top:354.8px;font-size:8.4px;line-height:9px;color:#555;transform:scaleX(0.875);transform-origin:0 0;">STREET</div>
<div class="t" style="left:349.1px;top:354.8px;font-size:8.4px;line-height:9px;color:#555;transform:scaleX(0.875);transform-origin:0 0;">CITY</div>
<div class="t" style="left:403.2px;top:354.8px;font-size:8.4px;line-height:9px;color:#555;transform:scaleX(0.875);transform-origin:0 0;">STATE</div>
<div class="t" style="left:457.3px;top:354.8px;font-size:8.4px;line-height:9px;color:#555;transform:scaleX(0.875);transform-origin:0 0;">ZIP</div>
<div class="t" style="left:511.3px;top:354.8px;font-size:8.4px;line-height:9px;color:#555;transform:scaleX(0.875);transform-origin:0 0;">BIRTHDA...</div>
<div class="t" style="left:565.4px;top:354.8px;font-size:8.4px;line-height:9px;color:#555;transform:scaleX(0.875);transform-origin:0 0;">ACTIONS</div>
<div class="a" style="left:181px;top:371.6px;width:441.7px;height:33.4px;background:#f9f9f9;"></div>
<div class="a" style="left:181px;top:405.0px;width:441.7px;height:1px;background:#ececec;"></div>
<div class="t" style="left:186.8px;top:379.2px;font-size:8.3px;line-height:10.6px;color:#555;transform:scaleX(0.92);transform-origin:0 0;">Eric</div>
<div class="t" style="left:240.7px;top:379.2px;font-size:8.3px;line-height:10.6px;color:#555;transform:scaleX(0.92);transform-origin:0 0;">Lin</div>
<div class="t" style="left:294.9px;top:379.2px;font-size:8.3px;line-height:10.6px;color:#555;transform:scaleX(0.92);transform-origin:0 0;">45 Houston<br>Street</div>
<div class="t" style="left:349.1px;top:379.2px;font-size:8.3px;line-height:10.6px;color:#555;transform:scaleX(0.92);transform-origin:0 0;">New York</div>
<div class="t" style="left:403.2px;top:379.2px;font-size:8.3px;line-height:10.6px;color:#555;transform:scaleX(0.92);transform-origin:0 0;">NY</div>
<div class="t" style="left:457.3px;top:379.2px;font-size:8.3px;line-height:10.6px;color:#555;transform:scaleX(0.92);transform-origin:0 0;">10106</div>
<div class="t" style="left:511.3px;top:379.2px;font-size:8.3px;line-height:10.6px;color:#555;transform:scaleX(0.92);transform-origin:0 0;">1973-10-21</div>
<svg style="left:568.5px;top:382.1px" width="9" height="9" viewBox="0 0 9 9"><path d="M0.8 8.2 L1.2 6.1 L6.3 1 L8 2.7 L2.9 7.8 Z M5.4 1.9 L7.1 3.6" stroke="#a8a8a8" stroke-width="0.95" fill="none"/></svg>
<svg style="left:584.4px;top:382.1px" width="9" height="9" viewBox="0 0 9 9"><path d="M0.3 1.6 H8.2 V2.6 H0.3 Z M3 0.4 H5.5 V1.6 H3 Z" fill="#c4c4c4"/><path d="M1.2 3 H7.3 L6.8 8.2 H1.7 Z" fill="#c4c4c4"/><path d="M3.2 3.8 V7.4 M5.3 3.8 V7.4" stroke="#e6e6e6" stroke-width="0.5"/></svg>
<div class="a" style="left:181px;top:406px;width:441.7px;height:34px;background:#fff;"></div>
<div class="a" style="left:181px;top:439.6px;width:441.7px;height:1px;background:#ececec;"></div>
<div class="t" style="left:186.8px;top:413px;font-size:8.3px;line-height:10.6px;color:#555;transform:scaleX(0.92);transform-origin:0 0;">Brad</div>
<div class="t" style="left:240.7px;top:413px;font-size:8.3px;line-height:10.6px;color:#555;transform:scaleX(0.92);transform-origin:0 0;">Tucker</div>
<div class="t" style="left:294.9px;top:413px;font-size:8.3px;line-height:10.6px;color:#555;transform:scaleX(0.92);transform-origin:0 0;">25 Liberty<br>Pl</div>
<div class="t" style="left:349.1px;top:413px;font-size:8.3px;line-height:10.6px;color:#555;transform:scaleX(0.92);transform-origin:0 0;">Boston</div>
<div class="t" style="left:403.2px;top:413px;font-size:8.3px;line-height:10.6px;color:#555;transform:scaleX(0.92);transform-origin:0 0;">MA</div>
<div class="t" style="left:457.3px;top:413px;font-size:8.3px;line-height:10.6px;color:#555;transform:scaleX(0.92);transform-origin:0 0;">02127</div>
<div class="t" style="left:511.3px;top:413px;font-size:8.3px;line-height:10.6px;color:#555;transform:scaleX(0.92);transform-origin:0 0;">1991-03-19</div>
<svg style="left:568.5px;top:416.5px" width="9" height="9" viewBox="0 0 9 9"><path d="M0.8 8.2 L1.2 6.1 L6.3 1 L8 2.7 L2.9 7.8 Z M5.4 1.9 L7.1 3.6" stroke="#a8a8a8" stroke-width="0.95" fill="none"/></svg>
<svg style="left:584.4px;top:416.5px" width="9" height="9" viewBox="0 0 9 9"><path d="M0.3 1.6 H8.2 V2.6 H0.3 Z M3 0.4 H5.5 V1.6 H3 Z" fill="#c4c4c4"/><path d="M1.2 3 H7.3 L6.8 8.2 H1.7 Z" fill="#c4c4c4"/><path d="M3.2 3.8 V7.4 M5.3 3.8 V7.4" stroke="#e6e6e6" stroke-width="0.5"/></svg>
<div class="a" style="left:181px;top:440.6px;width:441.7px;height:4.4px;background:#f9f9f9;"></div>
<div class="a" style="left:234.4px;top:347px;width:1px;height:98px;background:#efefef;"></div>
<div class="a" style="left:288.6px;top:347px;width:1px;height:98px;background:#efefef;"></div>
<div class="a" style="left:342.8px;top:347px;width:1px;height:98px;background:#efefef;"></div>
<div class="a" style="left:396.9px;top:347px;width:1px;height:98px;background:#efefef;"></div>
<div class="a" style="left:451.0px;top:347px;width:1px;height:98px;background:#efefef;"></div>
<div class="a" style="left:505.0px;top:347px;width:1px;height:98px;background:#efefef;"></div>
<div class="a" style="left:559.1px;top:347px;width:1px;height:98px;background:#efefef;"></div>

<!-- STATUS BAR -->
<div class="a" style="left:160px;top:445px;width:491px;height:16px;background:#2a2a2a;"></div>
<div class="a" style="left:160px;top:445px;width:491px;height:1px;background:#1a1a1a;"></div>
<div class="a" style="left:160px;top:460px;width:491px;height:1px;background:#1a1a1a;"></div>
<div class="t" style="left:176.8px;top:448.6px;font-size:7px;line-height:9px;color:#2d8be6;">page1</div>

<!-- RIGHT PANEL -->
<div class="a" style="left:651px;top:29px;width:169px;height:432px;background:#424242;"></div>
<div class="a" style="left:651px;top:29px;width:169px;height:21.6px;background:#494949;"></div>
<div class="t" style="left:680px;top:33.8px;width:40.5px;text-align:right;font-size:8px;line-height:9px;color:#e6e6e6;">page1</div>
<div class="a" style="left:651px;top:50.6px;width:169px;height:22.2px;background:#1b1b1b;"></div>
<svg style="left:797px;top:56.5px" width="11" height="11" viewBox="0 0 11 11"><circle cx="5.5" cy="5.5" r="4.8" stroke="#999" stroke-width="0.9" fill="none"/></svg>
<div class="a" style="left:658px;top:78px;width:156px;height:15.5px;background:#3a3a3a;border:1px solid #555;border-radius:1px;"></div>
<div class="t" style="left:657.8px;top:107.6px;font-size:6.6px;line-height:8px;color:#c8c8c8;">Page Title</div>
<div class="a" style="left:657.8px;top:119.4px;width:132.9px;height:16.6px;background:#323232;border:1px solid #555;border-radius:2px;"></div>
<div class="t" style="left:664.5px;top:124.2px;font-size:6.6px;line-height:8px;color:#e0e0e0;">Datatable</div>
<svg style="left:796px;top:124px" width="9" height="9" viewBox="0 0 9 9"><path d="M3.6 5.4 L5.4 3.6 M4.4 2.2 L5.6 1 Q6.6 0 7.6 1 Q8.6 2 7.6 3 L6.4 4.2 M4.6 6.8 L3.4 8 Q2.4 9 1.4 8 Q0.4 7 1.4 6 L2.6 4.8" stroke="#c8c8c8" stroke-width="0.9" fill="none"/></svg>
<div class="a" style="left:651px;top:144.8px;width:169px;height:13.9px;background:#1c1c1c;"></div>
<div class="t" style="left:657.6px;top:147px;font-size:7.6px;line-height:9px;color:#e6e6e6;-webkit-text-stroke:0.25px;">Page Params</div>
<div class="a" style="left:658px;top:166.8px;width:137.8px;height:39px;background:#333;"></div>
<div class="a" style="left:658px;top:166.8px;width:137.8px;height:16.8px;background:#2a2a2a;"></div>
<div class="a" style="left:735.3px;top:166.8px;width:1px;height:39px;background:#3a3a3a;"></div>
<div class="a" style="left:782.5px;top:166.8px;width:1px;height:39px;background:#3a3a3a;"></div>
<div class="t" style="left:661.4px;top:171px;font-size:7.6px;line-height:9px;color:#f0f0f0;-webkit-text-stroke:0.35px;">Name</div>
<div class="t" style="left:738.2px;top:171px;font-size:7.6px;line-height:9px;color:#f0f0f0;-webkit-text-stroke:0.35px;">Type</div>
<div class="a" style="left:661.3px;top:186.5px;width:71px;height:17.2px;background:#2e2e2e;border:1px solid #555;border-radius:2px;"></div>
<div class="t" style="left:667.7px;top:191.8px;font-size:6.5px;line-height:8px;color:#8a8a8a;">parameter name</div>
<div class="a" style="left:738px;top:186.5px;width:42.5px;height:17.2px;background:#2e2e2e;border:1px solid #555;border-radius:2px;"></div>
<div class="t" style="left:744.4px;top:191.6px;font-size:6.9px;line-height:8px;color:#f0f0f0;">string</div>
<svg style="left:773px;top:192.5px" width="4" height="4" viewBox="0 0 4 4"><path d="M0 0.2 H3.6 L1.8 3.6 Z" fill="#e6e6e6"/></svg>
<svg style="left:785px;top:190px" width="9" height="9" viewBox="0 0 9 9"><path d="M4.5 0.3 V8.7 M0.3 4.5 H8.7" stroke="#e6e6e6" stroke-width="0.8"/></svg>

<!-- EXPORT MENU -->
<div class="a" style="left:607px;top:29px;width:102.5px;height:79px;background:#171717;border:1px solid #0a0a0a;box-shadow:0 1px 3px rgba(0,0,0,.35);"></div>
<div class="a" style="left:610px;top:50px;width:96px;height:18.4px;background:#1e95f0;"></div>
<svg style="left:616.5px;top:36.8px" width="7" height="8" viewBox="0 0 7 8"><path d="M0.5 0.5 H4.4 L6.4 2.5 V7.5 H0.5 Z" stroke="#ddd" stroke-width="0.9" fill="none"/><path d="M3.2 5.6 H6.4" stroke="#ddd" stroke-width="0.9"/></svg>
<div class="t" style="left:626.7px;top:36.2px;font-size:7.7px;line-height:9px;transform:scaleX(0.91);transform-origin:0 0;-webkit-text-stroke:0.25px;color:#e8e8e8;">Project As ZIP</div>
<svg style="left:616.5px;top:55.2px" width="7" height="8" viewBox="0 0 7 8"><path d="M0.3 0.3 H4.6 L6.6 2.3 V7.7 H0.3 Z" fill="#fff"/></svg>
<div class="t" style="left:626.7px;top:54.8px;font-size:7.7px;line-height:9px;transform:scaleX(0.91);transform-origin:0 0;-webkit-text-stroke:0.25px;color:#fff;">Project As WAR</div>
<svg style="left:692px;top:56.5px" width="5" height="5" viewBox="0 0 5 5"><path d="M0.2 0.2 L4.6 2.5 L0.2 4.8 Z" fill="#fff"/></svg>
<svg style="left:615.8px;top:73.4px" width="8" height="8" viewBox="0 0 8 8"><rect x="0.5" y="0.5" width="7" height="7" rx="0.8" stroke="#ddd" stroke-width="0.9" fill="none"/><path d="M2.3 0.5 V2.6 H5.7 V0.5 M4 3.8 V6.4 M2.9 5.3 L4 6.4 L5.1 5.3" stroke="#ddd" stroke-width="0.8" fill="none"/></svg>
<div class="t" style="left:626.7px;top:72.8px;font-size:7.7px;line-height:9px;transform:scaleX(0.91);transform-origin:0 0;-webkit-text-stroke:0.25px;color:#e8e8e8;">Project as Shell to EDN</div>
<svg style="left:615.8px;top:91px" width="8" height="8" viewBox="0 0 8 8"><rect x="0.5" y="0.5" width="7" height="7" rx="0.8" stroke="#ddd" stroke-width="0.9" fill="none"/><path d="M2.3 0.5 V2.6 H5.7 V0.5 M4 3.8 V6.4 M2.9 5.3 L4 6.4 L5.1 5.3" stroke="#ddd" stroke-width="0.8" fill="none"/></svg>
<div class="t" style="left:626.7px;top:90.3px;font-size:7.7px;line-height:9px;transform:scaleX(0.91);transform-origin:0 0;-webkit-text-stroke:0.25px;color:#e8e8e8;">Theme to EDN</div>

<!-- PROFILE SUBMENU -->
<div class="a" style="left:707px;top:46.3px;width:95px;height:58px;background:#1c1c1c;border:1.5px solid #0e0e0e;box-shadow:0 1px 2px rgba(0,0,0,.4);"></div>
<div class="a" style="left:709.4px;top:49.2px;width:89.2px;height:16px;background:#2b2b2b;"></div>
<div class="t" style="left:715.6px;top:53.1px;font-size:7.9px;line-height:9px;color:#a8a8a8;transform:scaleX(0.93);transform-origin:0 0;-webkit-text-stroke:0.2px;">Select Profile</div>
<svg style="left:714.8px;top:70.8px" width="9" height="8" viewBox="0 0 9 8"><circle cx="3.8" cy="2" r="1.7" stroke="#e0e0e0" stroke-width="0.8" fill="none"/><path d="M0.5 7.2 Q0.5 4.6 3.8 4.6 Q5.4 4.6 6.2 5.4 M0.5 7.2 H5.6" stroke="#e0e0e0" stroke-width="0.8" fill="none"/><circle cx="7.3" cy="6.6" r="1" stroke="#e0e0e0" stroke-width="0.8" fill="none"/></svg>
<div class="t" style="left:727.5px;top:69.1px;font-size:7.7px;line-height:9px;color:#e8e8e8;transform:scaleX(0.93);transform-origin:0 0;-webkit-text-stroke:0.2px;">development</div>
<div class="a" style="left:709.4px;top:83.3px;width:89.2px;height:18.2px;background:#1e95f0;"></div>
<svg style="left:714.8px;top:88.8px" width="9" height="8" viewBox="0 0 9 8"><circle cx="3.8" cy="2" r="1.7" stroke="#fff" stroke-width="0.8" fill="none"/><path d="M0.5 7.2 Q0.5 4.6 3.8 4.6 Q5.4 4.6 6.2 5.4 M0.5 7.2 H5.6" stroke="#fff" stroke-width="0.8" fill="none"/><circle cx="7.3" cy="6.6" r="1" stroke="#fff" stroke-width="0.8" fill="none"/></svg>
<div class="t" style="left:727.5px;top:87.1px;font-size:7.7px;line-height:9px;color:#fff;transform:scaleX(0.93);transform-origin:0 0;-webkit-text-stroke:0.2px;">deployment</div>

</body></html>
